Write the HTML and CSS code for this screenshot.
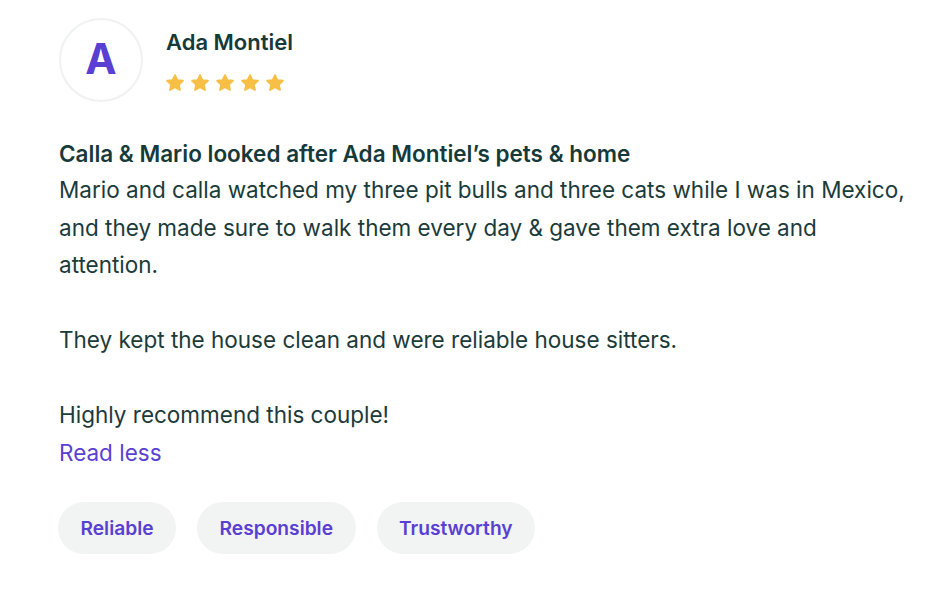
FILE: index.html
```html
<!DOCTYPE html>
<html lang="en">
<head>
<meta charset="utf-8">
<title>Review</title>
<link rel="stylesheet" href="styles.css">
</head>
<body>
<article class="review">
  <header class="review-head">
    <div class="avatar">A</div>
    <div class="who">
      <div class="name">Ada Montiel</div>
      <div class="stars">
        <svg class="star" viewBox="0 0 24 24"><polygon points="12,2.5 14.9,8.6 21.5,9.3 16.6,13.8 18,20.3 12,17 6,20.3 7.4,13.8 2.5,9.3 9.1,8.6"/></svg>
        <svg class="star" viewBox="0 0 24 24"><polygon points="12,2.5 14.9,8.6 21.5,9.3 16.6,13.8 18,20.3 12,17 6,20.3 7.4,13.8 2.5,9.3 9.1,8.6"/></svg>
        <svg class="star" viewBox="0 0 24 24"><polygon points="12,2.5 14.9,8.6 21.5,9.3 16.6,13.8 18,20.3 12,17 6,20.3 7.4,13.8 2.5,9.3 9.1,8.6"/></svg>
        <svg class="star" viewBox="0 0 24 24"><polygon points="12,2.5 14.9,8.6 21.5,9.3 16.6,13.8 18,20.3 12,17 6,20.3 7.4,13.8 2.5,9.3 9.1,8.6"/></svg>
        <svg class="star" viewBox="0 0 24 24"><polygon points="12,2.5 14.9,8.6 21.5,9.3 16.6,13.8 18,20.3 12,17 6,20.3 7.4,13.8 2.5,9.3 9.1,8.6"/></svg>
      </div>
    </div>
  </header>
  <h2 class="title">Calla &amp; Mario looked after Ada Montiel’s pets &amp; home</h2>
  <p class="body">Mario and calla watched my three pit bulls and three cats while I was in Mexico, and they made sure to walk them every day &amp; gave them extra love and attention.

They kept the house clean and were reliable house sitters.

Highly recommend this couple!</p>
  <a class="toggle" href="#">Read less</a>
  <ul class="tags">
    <li class="tag">Reliable</li>
    <li class="tag">Responsible</li>
    <li class="tag">Trustworthy</li>
  </ul>
</article>
</body>
</html>
```
FILE: styles.css
```css
* { box-sizing: border-box; }
html, body { margin: 0; padding: 0; background: #ffffff; }
body {
  font-family: "Inter", "Noto Sans", sans-serif;
  color: #163a3a;
}
.review {
  padding: 18px 0 0 59px;
  width: 930px;
}
.review-head {
  display: flex;
  align-items: flex-start;
  gap: 23px;
}
.avatar {
  width: 84px;
  height: 84px;
  border-radius: 50%;
  border: 2px solid #f0f1f1;
  display: flex;
  align-items: center;
  justify-content: center;
  font-size: 42px;
  font-weight: 700;
  color: #5a3fd3;
  line-height: 1;
  padding-bottom: 2px;
}
.who {
  padding-top: 11px;
  display: flex;
  flex-direction: column;
  gap: 18px;
}
.name {
  font-size: 22px;
  font-weight: 600;
  line-height: 26px;
  color: #163a3a;
}
.stars {
  display: flex;
  gap: 5px;
  margin-left: -1px;
}
.star {
  width: 20px;
  height: 20px;
  display: block;
}
.star polygon {
  fill: #f7bf45;
  stroke: #f7bf45;
  stroke-width: 2.2;
  stroke-linejoin: round;
}
.title {
  margin: 34px 0 0;
  font-size: 22.5px;
  font-weight: 600;
  line-height: 35px;
  color: #163a3a;
}
.body {
  margin: 0;
  font-size: 22.5px;
  line-height: 37.5px;
  white-space: pre-line;
  max-width: 860px;
  color: #1b3b3b;
}
.toggle {
  display: block;
  font-size: 22.5px;
  line-height: 37.5px;
  color: #5a3fd3;
  text-decoration: none;
}
.tags {
  list-style: none;
  margin: 31px 0 0 -1px;
  padding: 0;
  display: flex;
  gap: 21px;
}
.tag {
  height: 52px;
  display: flex;
  align-items: center;
  padding: 0 22.5px;
  border-radius: 26px;
  background: #f2f3f3;
  color: #5a3fd3;
  font-size: 19.2px;
  font-weight: 600;
}
```
